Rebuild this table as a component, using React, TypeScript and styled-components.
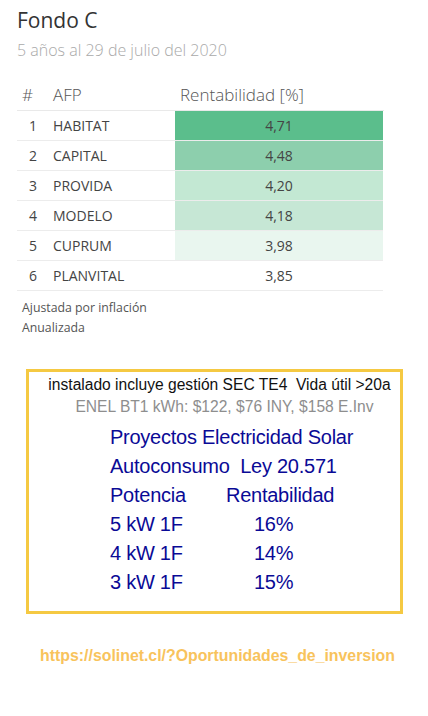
import React from 'react';
import styled, { createGlobalStyle } from 'styled-components';

const GlobalStyle = createGlobalStyle`
  body {
    margin: 0;
    background: #ffffff;
  }
`;

interface AfpRow {
  name: string;
  value: string;
  shade: string;
}

const AFP_ROWS: AfpRow[] = [
  { name: 'HABITAT', value: '4,71', shade: '#5bbe8c' },
  { name: 'CAPITAL', value: '4,48', shade: '#8dcfad' },
  { name: 'PROVIDA', value: '4,20', shade: '#c3e8d3' },
  { name: 'MODELO', value: '4,18', shade: '#c6e7d5' },
  { name: 'CUPRUM', value: '3,98', shade: '#e9f6ef' },
  { name: 'PLANVITAL', value: '3,85', shade: 'transparent' },
];

const SOLAR_ROWS = [
  { power: '5 kW 1F', rate: '16%' },
  { power: '4 kW 1F', rate: '14%' },
  { power: '3 kW 1F', rate: '15%' },
];

const App = () => (
  <Page>
    <GlobalStyle />
    <Ranking>
      <Title>Fondo C</Title>
      <Subtitle>5 años al 29 de julio del 2020</Subtitle>

      <Table>
        <HeadRow>
          <HeadCell $pad={5}>#</HeadCell>
          <HeadCell $pad={6}>AFP</HeadCell>
          <HeadCell $pad={5}>Rentabilidad [%]</HeadCell>
        </HeadRow>
        {AFP_ROWS.map((row, i) => (
          <BodyRow key={row.name}>
            <NumCell>{i + 1}</NumCell>
            <NameCell>{row.name}</NameCell>
            <ValueCell $shade={row.shade}>{row.value}</ValueCell>
          </BodyRow>
        ))}
      </Table>

      <Notes>
        <Note>Ajustada por inflación</Note>
        <Note>Anualizada</Note>
      </Notes>
    </Ranking>

    <SolarBox>
      <InfoLine>instalado incluye gestión SEC TE4  Vida útil &gt;20a</InfoLine>
      <TariffLine>ENEL BT1 kWh: $122, $76 INY, $158 E.Inv</TariffLine>
      <SolarBlock>
        <BlueLine>Proyectos Electricidad Solar</BlueLine>
        <BlueLine>Autoconsumo  Ley 20.571</BlueLine>
        <SolarGrid>
          <BlueLine>Potencia</BlueLine>
          <BlueLine>Rentabilidad</BlueLine>
          {SOLAR_ROWS.map((row) => (
            <React.Fragment key={row.power}>
              <BlueLine>{row.power}</BlueLine>
              <Rate>{row.rate}</Rate>
            </React.Fragment>
          ))}
        </SolarGrid>
      </SolarBlock>
    </SolarBox>

    <Link>https://solinet.cl/?Oportunidades_de_inversion</Link>
  </Page>
);

export default App;

const Page = styled.div`
  width: 428px;
  height: 716px;
  display: flex;
  flex-direction: column;
  background: #ffffff;
`;

const Ranking = styled.section`
  padding: 6px 0 0 17px;
  width: 367px;
  font-family: 'Open Sans', sans-serif;
`;

const Title = styled.h1`
  margin: 0;
  font-size: 21px;
  font-weight: 400;
  line-height: 28px;
  color: #333333;
`;

const Subtitle = styled.div`
  margin-top: 5px;
  font-size: 16px;
  font-weight: 300;
  line-height: 22px;
  color: #a9a9a9;
`;

const Table = styled.div`
  margin-top: 19px;
  display: grid;
  grid-template-columns: 30px 128px 209px;
`;

const HeadRow = styled.div`
  display: contents;
`;

const HeadCell = styled.div<{ $pad: number }>`
  padding-left: ${({ $pad }) => $pad}px;
  height: 30px;
  line-height: 29px;
  font-size: 17px;
  font-weight: 300;
  color: #555555;
  border-bottom: 1px solid #e9e9e9;
`;

const BodyRow = styled.div`
  display: contents;
`;

const Cell = styled.div`
  height: 29px;
  line-height: 29px;
  font-size: 14px;
  color: #444444;
  border-bottom: 1px solid #ececec;
`;

const NumCell = styled(Cell)`
  padding-left: 12px;
`;

const NameCell = styled(Cell)`
  padding-left: 6px;
`;

const ValueCell = styled(Cell)<{ $shade: string }>`
  text-align: center;
  background: ${({ $shade }) => $shade};
  margin-right: 1px;
`;

const Notes = styled.div`
  margin-top: 7px;
  padding-left: 5px;
`;

const Note = styled.div`
  font-size: 12.3px;
  line-height: 20px;
  color: #555555;
`;

const SolarBox = styled.section`
  margin: 31px 0 0 26px;
  width: 371px;
  border: 3px solid #f5c942;
  padding: 2px 0 14px;
  font-family: 'Liberation Sans', Arial, sans-serif;
`;

const InfoLine = styled.div`
  white-space: pre;
  text-align: center;
  padding-left: 10px;
  font-size: 15.6px;
  line-height: 22px;
  color: #111111;
`;

const TariffLine = styled.div`
  text-align: center;
  padding-left: 20px;
  font-size: 15.6px;
  line-height: 22px;
  color: #8e8e8e;
`;

const SolarBlock = styled.div`
  margin-top: 5px;
  padding-left: 81px;
`;

const BlueLine = styled.div`
  white-space: pre;
  font-size: 20px;
  letter-spacing: -0.25px;
  line-height: 29px;
  color: #0a0a96;
`;

const SolarGrid = styled.div`
  display: grid;
  grid-template-columns: 116px auto;
`;

const Rate = styled(BlueLine)`
  padding-left: 28px;
`;

const Link = styled.div`
  margin-top: 32px;
  padding-left: 7px;
  text-align: center;
  font-family: 'Liberation Sans', Arial, sans-serif;
  font-size: 15.85px;
  font-weight: 700;
  line-height: 20px;
  color: #f8c35c;
`;
